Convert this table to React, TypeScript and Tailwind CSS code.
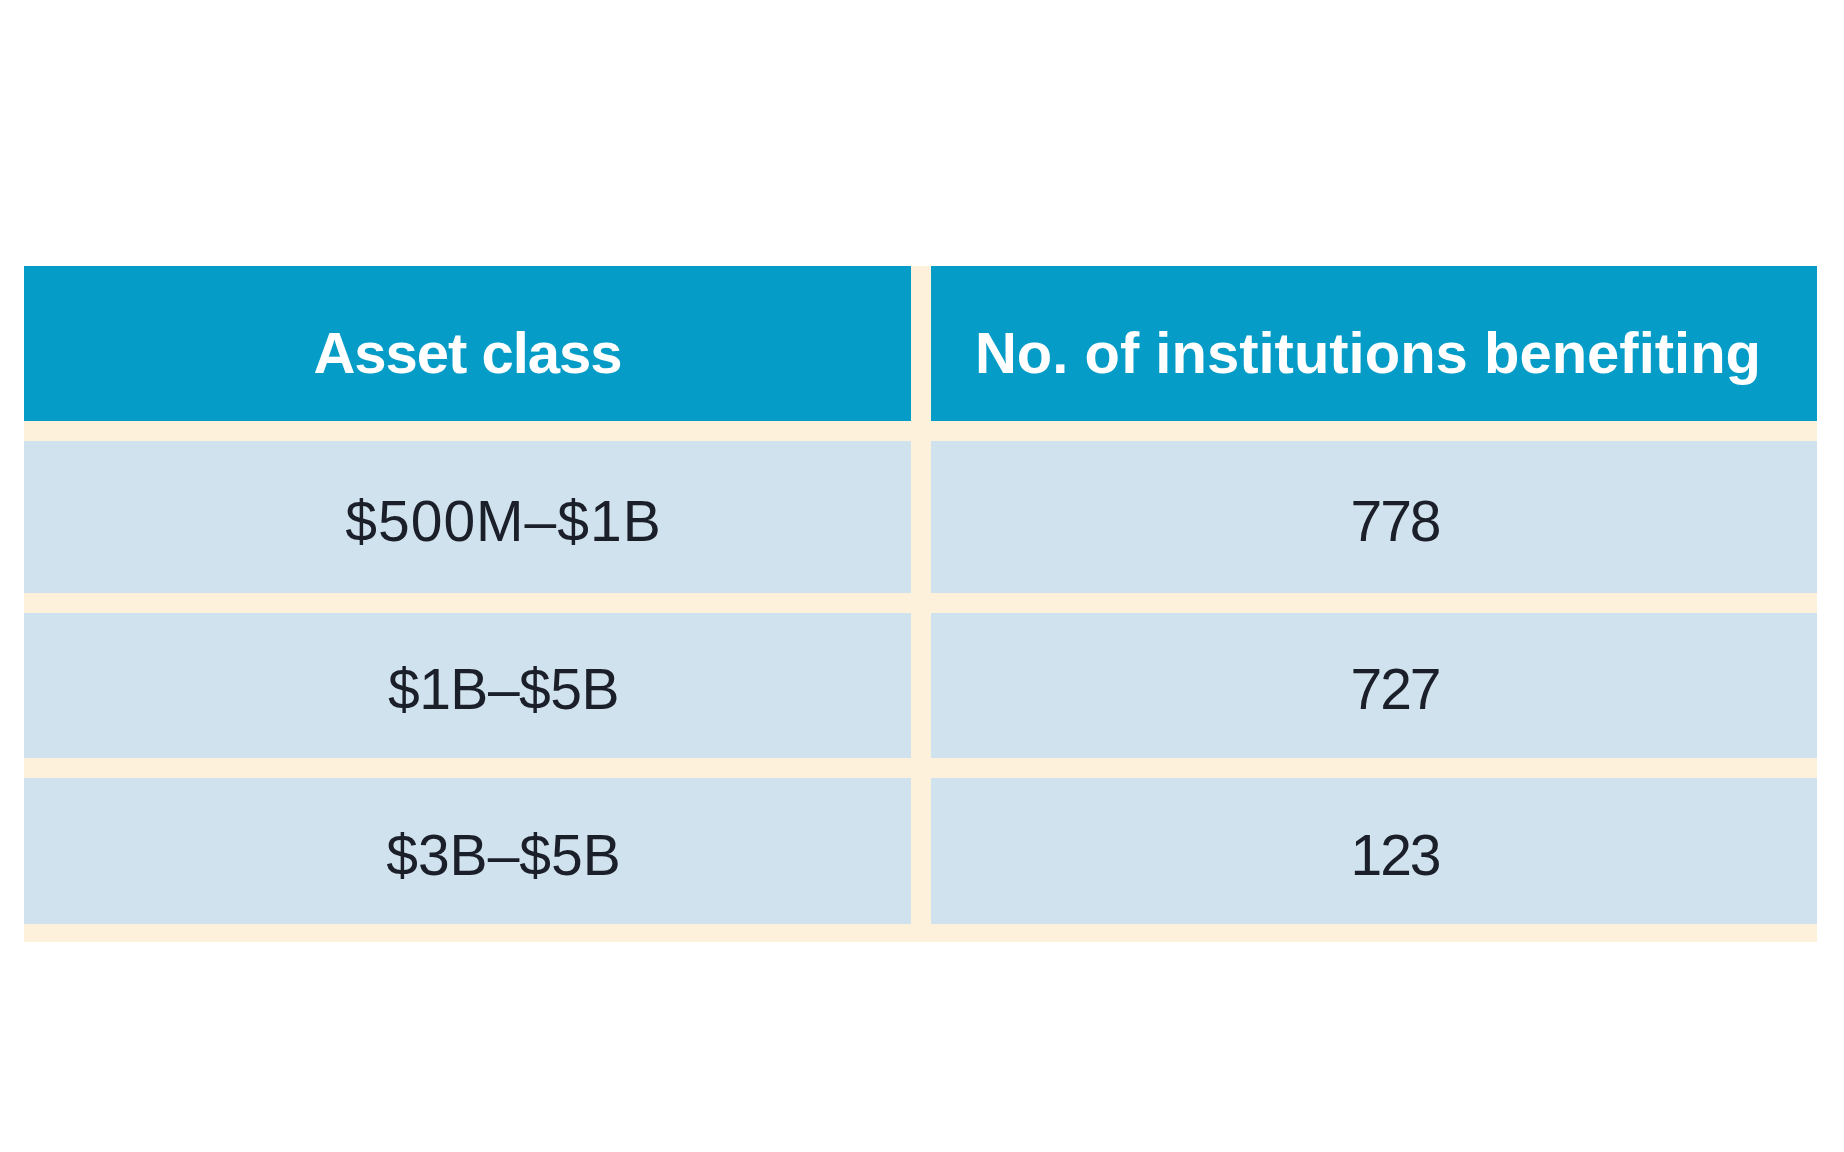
const rows = [
  { range: "$500M–$1B", count: "778", h: "h-[152px]", track: "tracking-[1px]" },
  { range: "$1B–$5B", count: "727", h: "h-[145px]", track: "tracking-[-0.5px]" },
  { range: "$3B–$5B", count: "123", h: "h-[146px]", track: "tracking-[0px]" },
];

export default function App() {
  return (
    <div className="min-h-[1152px] w-[1844px] bg-white pt-[266px] pl-[24px] font-['Liberation_Sans',Arial,sans-serif]">
      <div className="flex w-[1793px] flex-col gap-[20px] bg-[#fdf1dc] pb-[18px]">
        {/* header */}
        <div className="grid h-[155px] grid-cols-[887px_886px] gap-x-[20px]">
          <div className="flex items-center justify-center bg-[#059dc8] pt-[18px] text-[58px] leading-none font-bold tracking-[-1px] text-white">
            Asset class
          </div>
          <div className="flex items-center justify-center bg-[#059dc8] pt-[18px] pr-[12px] text-[58px] leading-none font-bold text-white">
            No. of institutions benefiting
          </div>
        </div>

        {rows.map((r) => (
          <div key={r.range} className={`grid grid-cols-[887px_886px] gap-x-[20px] ${r.h}`}>
            <div className={`flex items-center justify-center bg-[#d0e2ee] pt-[8px] pl-[72px] text-[57px] leading-none text-[#1b1f29] ${r.track}`}>
              {r.range}
            </div>
            <div className="flex items-center justify-center bg-[#d0e2ee] pt-[8px] pl-[42px] text-[57px] leading-none tracking-[-2px] text-[#1b1f29]">
              {r.count}
            </div>
          </div>
        ))}
      </div>
    </div>
  );
}
